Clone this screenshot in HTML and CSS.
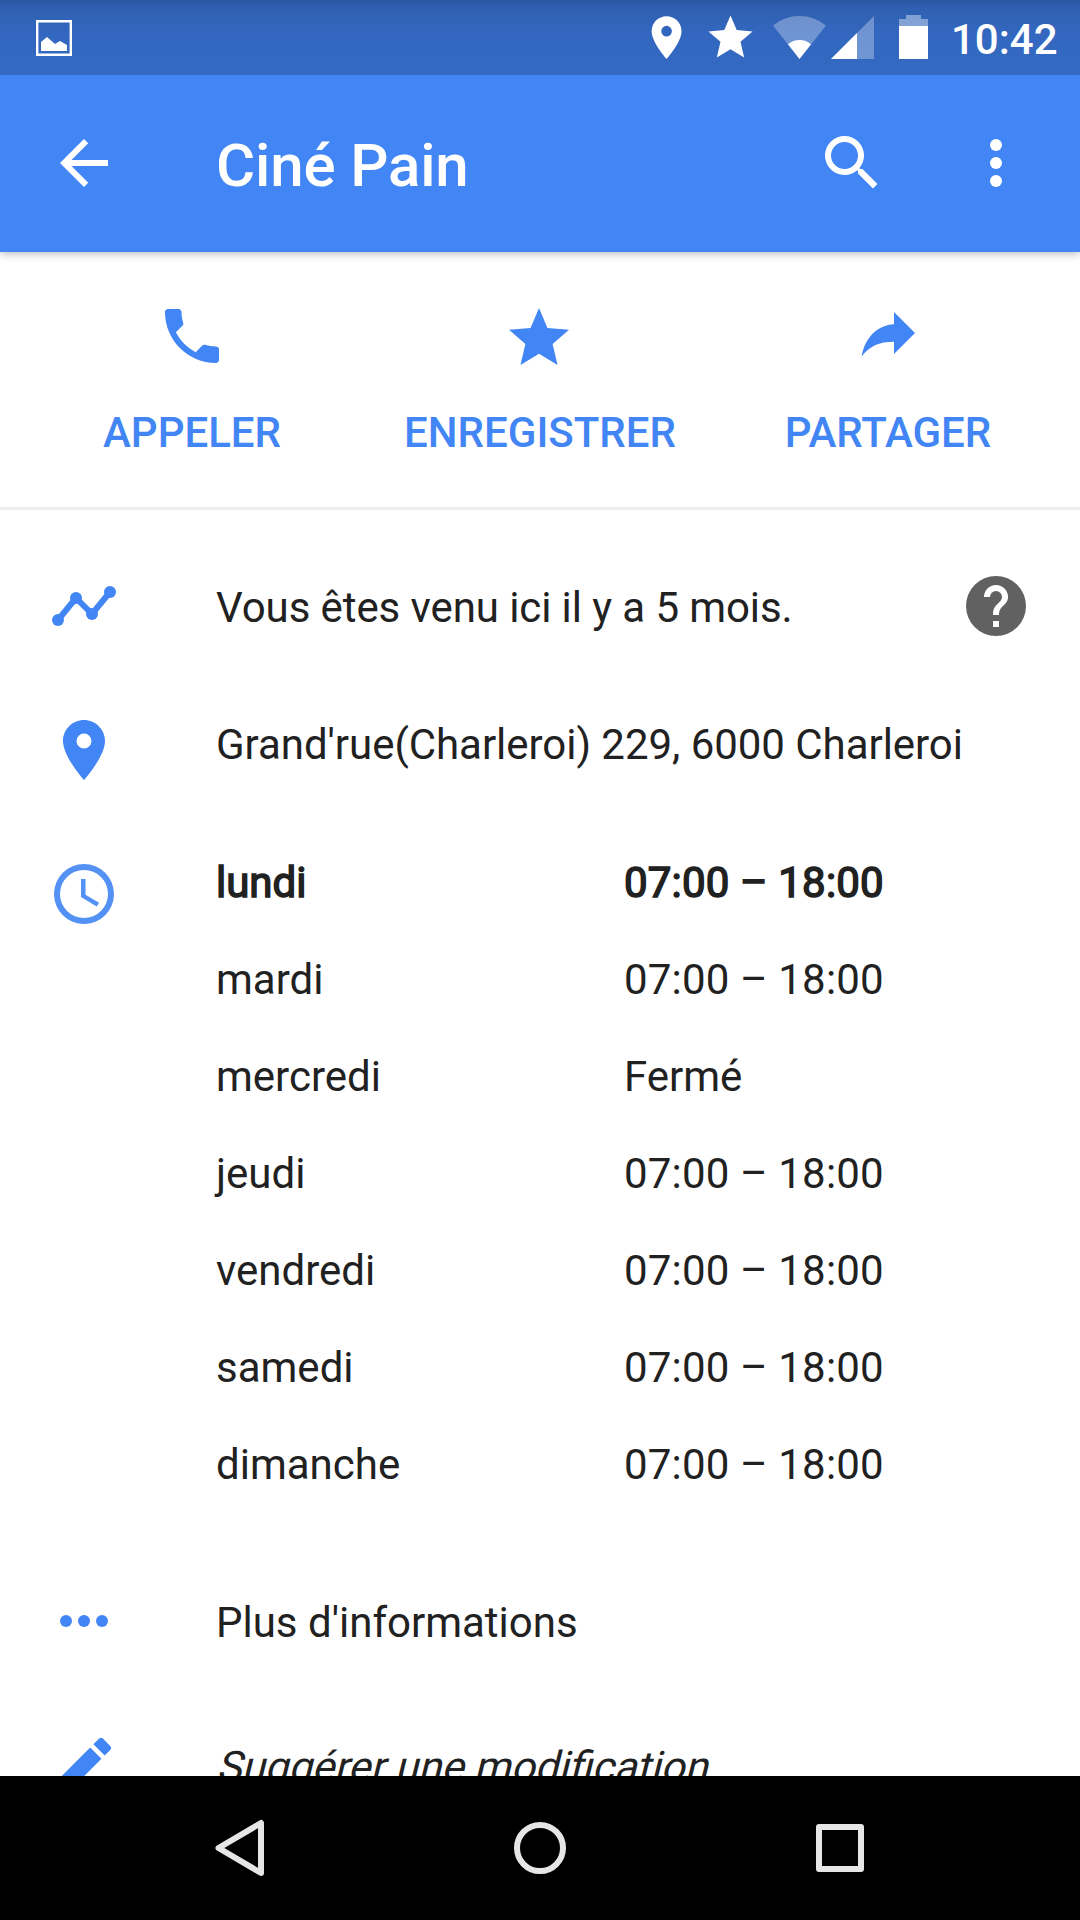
FILE: index.html
```html
<!DOCTYPE html>
<html lang="fr">
<head>
<meta charset="utf-8">
<title>Ciné Pain</title>
<link rel="stylesheet" href="styles.css">
</head>
<body>
<div class="screen">
  <div class="status">
    <svg class="photo" width="36" height="36" viewBox="0 0 36 36"><path fill="none" stroke="#fff" stroke-width="2.4" d="M1.2 1.2h33.6v33.6H1.2z"/><path fill="#fff" d="M5 31V22l6-5 8 7 5-3 7 4v6z"/></svg>
    <div class="status-icons">
      <svg class="s-pin" width="51.2" height="51.2" viewBox="0 0 24 24"><path d="M12 2C8.13 2 5 5.13 5 9c0 5.25 7 13 7 13s7-7.75 7-13c0-3.87-3.13-7-7-7zm0 9.5a2.5 2.5 0 0 1 0-5 2.5 2.5 0 0 1 0 5z"/></svg>
      <svg class="s-star" width="53" height="53" viewBox="0 0 24 24"><path d="M12 17.27L18.18 21l-1.64-7.03L22 9.24l-7.19-.61L12 2 9.19 8.63 2 9.24l5.46 4.73L5.82 21z"/></svg>
      <svg class="s-wifi" width="53" height="43" viewBox="0 0 53 43"><path opacity=".3" d="M26.5 43L0 9.5Q11.5 0 26.5 0T53 9.5z"/><path d="M26.5 43L15 28.3Q20 24 26.5 24T38 28.3z"/></svg>
      <svg class="s-signal" width="43" height="43" viewBox="0 0 43 43"><path opacity=".3" d="M0 43L43 0v43z"/><path d="M0 43L26 17v26z"/></svg>
      <svg class="s-battery" width="29" height="44" viewBox="0 0 29 44"><path opacity=".4" d="M0 11V4h7V0h15v4h7v7z"/><path d="M0 11h29v33H0z"/></svg>
    </div>
    <span class="clock">10:42</span>
  </div>
  <header class="appbar">
    <svg class="icon" viewBox="0 0 24 24"><path d="M20 11H7.83l5.59-5.59L12 4l-8 8 8 8 1.41-1.41L7.83 13H20z"/></svg>
    <h1 class="title">Ciné Pain</h1>
    <svg class="icon" viewBox="0 0 24 24"><path d="M15.5 14h-.79l-.28-.27A6.47 6.47 0 0 0 16 9.5 6.5 6.5 0 1 0 9.5 16c1.61 0 3.09-.59 4.23-1.57l.27.28v.79l5 4.99L20.49 19zm-6 0a4.5 4.5 0 1 1 0-9 4.5 4.5 0 0 1 0 9z"/></svg>
    <svg class="icon" viewBox="0 0 24 24"><circle cx="12" cy="6" r="2"/><circle cx="12" cy="12" r="2"/><circle cx="12" cy="18" r="2"/></svg>
  </header>
  <main class="content">
    <div class="actions">
      <div class="action">
        <svg class="icon" viewBox="0 0 24 24"><path d="M6.62 10.79c1.44 2.83 3.76 5.14 6.59 6.59l2.2-2.2c.27-.27.67-.36 1.02-.24 1.12.37 2.33.57 3.57.57.55 0 1 .45 1 1V20c0 .55-.45 1-1 1C10.61 21 3 13.39 3 4c0-.55.45-1 1-1h3.5c.55 0 1 .45 1 1 0 1.25.2 2.45.57 3.57.11.35.03.74-.25 1.02z"/></svg>
        <span>APPELER</span>
      </div>
      <div class="action">
        <svg class="icon star" viewBox="0 0 24 24"><path d="M12 17.27L18.18 21l-1.64-7.03L22 9.24l-7.19-.61L12 2 9.19 8.63 2 9.24l5.46 4.73L5.82 21z"/></svg>
        <span>ENREGISTRER</span>
      </div>
      <div class="action">
        <svg class="icon share" viewBox="0 0 24 24"><path d="M21 12l-7-7v4.1C8.5 9.4 4.3 13.5 3.2 19.9 5.7 16.4 9 14.9 14 14.9V19z"/></svg>
        <span>PARTAGER</span>
      </div>
    </div>
    <div class="row visit">
      <svg class="icon" viewBox="0 0 72 72"><path fill="none" stroke="#4285f4" stroke-width="6" d="M10 50l18-22 16 16 18-22"/><circle cx="10" cy="50" r="6"/><circle cx="28" cy="28" r="6"/><circle cx="44" cy="44" r="6"/><circle cx="62" cy="22" r="6"/></svg>
      <span class="text">Vous êtes venu ici il y a 5 mois.</span>
      <svg class="icon help" viewBox="0 0 24 24"><path d="M12 2a10 10 0 1 0 0 20 10 10 0 0 0 0-20zm1 17h-2v-2h2zm2.07-7.75l-.9.92C13.45 12.9 13 13.5 13 15h-2v-.5c0-1.1.45-2.1 1.17-2.83l1.24-1.26c.37-.36.59-.86.59-1.41a2 2 0 1 0-4 0H8a4 4 0 1 1 8 0c0 .88-.36 1.68-.93 2.25z"/></svg>
    </div>
    <div class="row address">
      <svg class="icon" viewBox="0 0 24 24"><path d="M12 2C8.13 2 5 5.13 5 9c0 5.25 7 13 7 13s7-7.75 7-13c0-3.87-3.13-7-7-7zm0 9.5a2.5 2.5 0 0 1 0-5 2.5 2.5 0 0 1 0 5z"/></svg>
      <span class="text">Grand'rue(Charleroi) 229, 6000 Charleroi</span>
    </div>
    <div class="row hours">
      <svg class="icon time" viewBox="0 0 24 24"><path d="M12 2a10 10 0 1 0 0 20 10 10 0 0 0 0-20zm0 18a8 8 0 1 1 0-16 8 8 0 0 1 0 16zm.5-13H11v6l5.25 3.15.75-1.23-4.5-2.67z"/></svg>
      <div class="schedule">
        <b>lundi</b><b class="span">07:00 – 18:00</b>
        <span>mardi</span><span class="span">07:00 – 18:00</span>
        <span>mercredi</span><span>Fermé</span>
        <span>jeudi</span><span class="span">07:00 – 18:00</span>
        <span>vendredi</span><span class="span">07:00 – 18:00</span>
        <span>samedi</span><span class="span">07:00 – 18:00</span>
        <span>dimanche</span><span class="span">07:00 – 18:00</span>
      </div>
    </div>
    <div class="row more">
      <svg class="icon" viewBox="0 0 24 24"><circle cx="6" cy="12" r="2"/><circle cx="12" cy="12" r="2"/><circle cx="18" cy="12" r="2"/></svg>
      <span class="text">Plus d'informations</span>
    </div>
    <div class="row edit">
      <svg class="icon" viewBox="0 0 24 24"><path d="M3 17.25V21h3.75L17.81 9.94l-3.75-3.75zM20.71 7.04a1 1 0 0 0 0-1.41l-2.34-2.34a1 1 0 0 0-1.41 0l-1.83 1.83 3.75 3.75z"/></svg>
      <span class="text">Suggérer une modification</span>
    </div>
  </main>
  <nav class="navbar">
    <svg class="icon" viewBox="0 0 72 72"><path d="M14.5 36L57 11v50z"/></svg>
    <svg class="icon" viewBox="0 0 72 72"><circle cx="36" cy="36" r="23"/></svg>
    <svg class="icon" viewBox="0 0 72 72"><path d="M15 15h42v42H15z"/></svg>
  </nav>
</div>
</body>
</html>
```
FILE: styles.css
```css
* { box-sizing: border-box; }
body { margin: 0; font-family: Roboto, "Noto Sans", sans-serif; font-size: 42px; color: #212121; }
svg { display: block; flex: none; fill: currentColor; }
.screen { width: 1080px; height: 1920px; display: flex; flex-direction: column; overflow: hidden; background: #fff; }
.icon { width: 72px; height: 72px; }

.status { position: relative; z-index: 2; height: 75px; flex: none; display: flex; align-items: flex-start; color: #fff; padding: 0 24px 0 36px; background: linear-gradient(#2a57a2 0, #2f60b1 8px, #3367c0 35px, #346ac3 75px); }
.photo { margin-top: 20px; }
.status-icons { display: flex; align-items: flex-start; margin-left: auto; }
.s-pin { margin: 11.7px 11.4px 0 0; }
.s-star { margin: 10.6px 16.4px 0 0; }
.s-wifi { margin: 16px 5px 0 0; }
.s-signal { margin: 16px 25px 0 0; }
.s-battery { margin: 15px 23px 0 0; }
.clock { width: 105px; line-height: 50px; margin-top: 15px; font-weight: 500; }

.appbar { position: relative; z-index: 1; height: 177px; flex: none; display: flex; align-items: flex-start; padding: 52px 48px 0; background: #4285f4; color: #fff; box-shadow: 0 1px 9px rgba(0, 0, 0, .32); }
.title { margin: 4px auto 0 96px; font-size: 60px; font-weight: 500; line-height: 70px; letter-spacing: -.15px; }
.appbar .title + .icon { margin-right: 72px; }

.content { flex: 1; min-height: 0; overflow: hidden; color: #212121; }
.actions { display: flex; height: 258px; padding: 48px 18px 0; border-bottom: 3px solid #eee; color: #4285f4; font-weight: 500; }
.action { flex: 1; display: flex; flex-direction: column; align-items: center; }
.action span { line-height: 50px; margin-top: 36px; }
.action .star { margin: 2px 1.5px -2px 0; }
.action .share { margin: -3px 0 3px; }

.row { display: flex; align-items: flex-start; padding: 0 48px; }
.row .icon { color: #4285f4; }
.row .text, .schedule { flex: 1; margin-left: 96px; line-height: 50px; white-space: nowrap; }
.visit { height: 144px; padding-top: 60px; }
.visit .text { margin-top: 13px; letter-spacing: -.09px; }
.row .help { color: #616161; }
.address { height: 144px; padding-top: 60px; }
.address .text { margin-top: 6px; letter-spacing: -.04px; }
.hours { height: 727px; padding-top: 60px; }
.row .time { color: #5491f5; }
.schedule { display: grid; grid-template-columns: 408px 1fr; grid-auto-rows: 97px; }
.schedule b { font-weight: 400; -webkit-text-stroke: 1.5px #212121; }
.schedule .span { letter-spacing: .17px; }
.more { height: 144px; padding-top: 60px; }
.more .text { margin-top: 13px; }
.edit { padding-top: 60px; }
.edit .text { margin-top: 13px; transform: skewX(-14deg); transform-origin: 0 40px; }

.navbar { height: 144px; flex: none; display: flex; justify-content: center; align-items: center; gap: 228px; background: #000; color: #e6e6e6; }
.navbar .icon { fill: none; stroke: currentColor; stroke-width: 6; stroke-linejoin: round; }
```
